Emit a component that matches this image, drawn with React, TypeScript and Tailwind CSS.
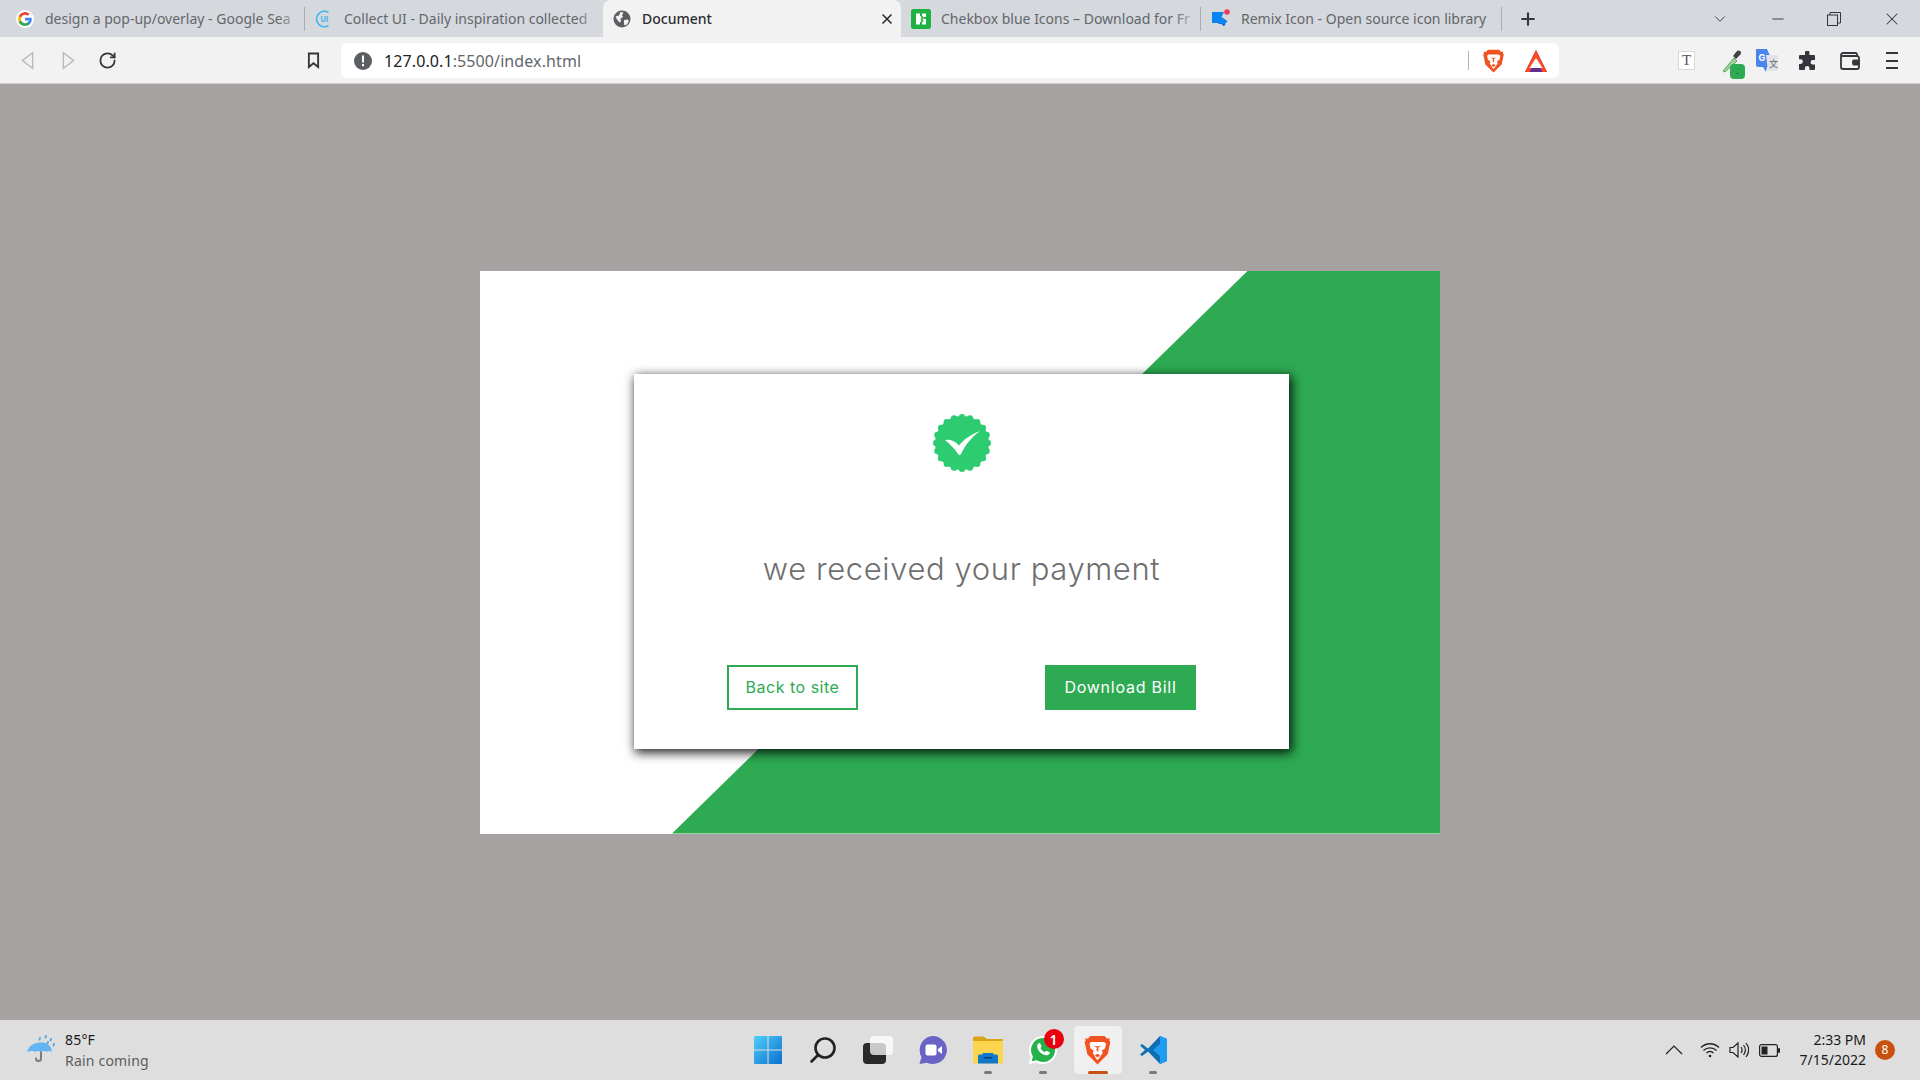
import type { ReactNode } from 'react';
import { ChevronDown, Minus, Plus, RotateCw, X } from 'lucide-react';

const uiFont = "font-['Noto_Sans',sans-serif]";
const cardFont = "font-['Inter',sans-serif]";

const tabs = [
  { title: 'design a pop-up/overlay - Google Sea', icon: <GoogleIcon />, width: 'w-[298px]' },
  { title: 'Collect UI - Daily inspiration collected', icon: <CollectIcon />, width: 'w-[298px]' },
  { title: 'Document', icon: <GlobeIcon />, width: 'w-[298px]', active: true },
  { title: 'Chekbox blue Icons – Download for Fr', icon: <ChekboxIcon />, width: 'w-[299px]' },
  { title: 'Remix Icon - Open source icon library', icon: <RemixIcon />, width: 'w-[300px]', last: true },
];

function GoogleIcon() {
  return (
    <svg viewBox="0 0 24 24" className="mr-px h-[18px] w-[18px] shrink-0 rounded-full bg-white">
      <path fill="#4285F4" d="M21 12.2c0-.7-.1-1.3-.2-1.9H12v3.6h5a4.4 4.4 0 0 1-1.9 2.8v2.4h3.1c1.8-1.7 2.8-4.1 2.8-6.9z" />
      <path fill="#34A853" d="M12 21.3c2.5 0 4.6-.8 6.2-2.2l-3.1-2.4c-.8.6-1.9.9-3.1.9-2.4 0-4.4-1.6-5.2-3.8H3.7v2.5a9.3 9.3 0 0 0 8.3 5z" />
      <path fill="#FBBC05" d="M6.8 13.8a5.6 5.6 0 0 1 0-3.6V7.7H3.7a9.3 9.3 0 0 0 0 8.6z" />
      <path fill="#EA4335" d="M12 6.4c1.4 0 2.6.5 3.5 1.4l2.7-2.7A9.3 9.3 0 0 0 3.7 7.7l3.1 2.5c.8-2.2 2.8-3.800 5.200-3.800z" />
    </svg>
  );
}

function CollectIcon() {
  return (
    <svg viewBox="0 0 18 18" className="mr-px h-[18px] w-[18px] shrink-0">
      <path d="M13.5 2.4A7.8 7.8 0 1 0 13.5 15.6" fill="none" stroke="#3db5ec" strokeWidth="1.5" />
      <text x="5.5" y="12" fontSize="7.5" fontWeight="700" fill="#3db5ec" fontFamily="Inter, sans-serif">UI</text>
    </svg>
  );
}

function GlobeIcon() {
  return (
    <svg viewBox="0 0 18 18" className="mr-px h-[18px] w-[18px] shrink-0">
      <circle cx="9" cy="9" r="8.5" fill="#5b5e62" />
      <path fill="#f2f2f2" d="M2.5 6.5 6 5.5l1.500-3.500 3 .5-1.500 2.500 1 2-2.500 1.500.5 3-1.500 1L4 9.500zM11 10l3.500-.5 1.500 1.500-2 3.500-2.500 1L11 13.500z" />
    </svg>
  );
}

function ChekboxIcon() {
  return (
    <svg viewBox="0 0 20 20" className="h-[20px] w-[20px] shrink-0">
      <rect width="20" height="20" rx="2.5" fill="#1fb141" />
      <path fill="#fff" d="M5 4.500h4v2.500a1.500 1.500 0 0 1 0 3 1.500 1.500 0 0 1 0 3v2.500H5zM11 4.500h4v3.500h-1.500a1 1 0 0 0 0 2H15v5.500h-4v-2.500a1.500 1.500 0 0 0 0-3 1.500 1.500 0 0 0 0-3z" />
    </svg>
  );
}

function RemixIcon() {
  return (
    <svg viewBox="0 0 20 20" className="h-[20px] w-[20px] shrink-0">
      <path fill="#0a84f0" d="M1 3h12l-2.500 5 6 4-4 5-3-3H1z" />
      <path fill="#0d5fd0" d="M6 14l4 0 3 3 1.500-2z" />
      <circle cx="16" cy="3" r="2.8" fill="#f0385a" />
    </svg>
  );
}

function BraveIcon({ size }: { size: string }) {
  return (
    <svg viewBox="0 0 24 28" className={size}>
      <path fill="#f1521f" d="M5.500 1h13l2.500 2.500 2.500-.5-.5 2 1 1.500-2.500 11.500-9.500 9.500L2.500 18 0 6.500 1 5 .5 3l2.500.5z" />
      <path fill="#fff" d="M6 6.500h12l2 1.500-1 4.500-3 2 1 2-4.500 6.500h-1L7.500 16.500l1-2-3-2-1-4.500zM8.500 10l3 2-.5 2 .8 1.500h.4L13 14l-.5-2 3-2-3 .5h-1z" />
      <path fill="#f1521f" d="M12 17.500l2.500 1.500-2.500 2-2.500-2z" />
    </svg>
  );
}

function TabItem({ title, icon, width, active, last }: { title: string; icon: ReactNode; width: string; active?: boolean; last?: boolean }) {
  return (
    <div className={`relative flex h-full shrink-0 items-center gap-[10px] pl-[10px] pr-[4px] ${width} ${active ? 'rounded-t-lg bg-[#f2f2f2]' : ''}`}>
      {icon}
      <span className={`min-w-0 flex-1 overflow-hidden whitespace-nowrap text-[14px] ${active ? 'font-medium text-[#2c2e31]' : 'text-[#63676c]'}`}>
        {title}
      </span>
      {active && <X size={16} strokeWidth={2.5} className="mr-[2px] shrink-0 text-[#2c2e31]" />}
      {!active && !last && <span className="absolute right-[2px] top-0 h-full w-[24px] bg-gradient-to-r from-transparent to-[#d5d8dc]" />}
    </div>
  );
}

function TabStrip() {
  return (
    <div className="flex h-[37px] items-center bg-[#d5d8dc] pl-[6px]">
      <TabItem {...tabs[0]} />
      <span className="h-[24px] w-px shrink-0 bg-[#a9adb1]" />
      <TabItem {...tabs[1]} />
      <TabItem {...tabs[2]} />
      <TabItem {...tabs[3]} />
      <span className="h-[24px] w-px shrink-0 bg-[#a9adb1]" />
      <TabItem {...tabs[4]} />
      <span className="h-[24px] w-px shrink-0 bg-[#a9adb1]" />
      <Plus size={20} strokeWidth={2.5} className="ml-[16px] text-[#33363a]" />
      <div className="ml-auto flex items-center text-[#33363a]">
        <ChevronDown size={18} strokeWidth={1.25} />
        <Minus size={18} strokeWidth={1.25} className="ml-[40px]" />
        <svg viewBox="0 0 14 14" className="ml-[40px] h-[14px] w-[14px]" fill="none" stroke="currentColor">
          <rect x="0.5" y="3" width="10" height="10.5" />
          <path d="M3 3V.5h10.500V11H10.500" />
        </svg>
        <X size={20} strokeWidth={1.25} className="ml-[41px] mr-[18px]" />
      </div>
    </div>
  );
}

function Toolbar() {
  return (
    <div className="flex h-[47px] items-start border-b border-[#cfcfcf] bg-[#f2f2f2] pt-[6px]">
      <div className="flex h-[35px] w-[341px] shrink-0 items-center">
        <svg viewBox="0 0 14 20" className="ml-[21px] h-[19px] w-[13px]" fill="none" stroke="#b9b9b9" strokeWidth="1.5">
          <path d="M12.500 1.500v17L1.500 10z" />
        </svg>
        <svg viewBox="0 0 14 20" className="ml-[28px] h-[19px] w-[13px]" fill="none" stroke="#b9b9b9" strokeWidth="1.5">
          <path d="M1.500 1.500v17L12.500 10z" />
        </svg>
        <RotateCw size={19} strokeWidth={2.25} className="ml-[23px] text-[#33363a]" />
        <svg viewBox="0 0 14 18" className="ml-[190px] h-[17px] w-[13px]" fill="none" stroke="#33363a" strokeWidth="2">
          <path d="M2 1.500h10v14.500l-5-4-5 4z" />
        </svg>
      </div>
      <div className="flex h-[35px] w-[1218px] shrink-0 items-center rounded-md bg-white">
        <svg viewBox="0 0 18 18" className="ml-[13px] h-[18px] w-[18px]">
          <circle cx="9" cy="9" r="9" fill="#5b5e62" />
          <rect x="8" y="3.5" width="2" height="7" fill="#fff" />
          <rect x="8" y="12" width="2" height="2.2" fill="#fff" />
        </svg>
        <span className="ml-[12px] text-[16px] tracking-[0.1px] text-[#202124]">
          127.0.0.1<span className="text-[#63676c]">:5500/index.html</span>
        </span>
        <span className="ml-auto h-[19px] w-px bg-[#b5b5b5]" />
        <span className="ml-[14px]">
          <BraveIcon size="block h-[24px] w-[21px]" />
        </span>
        <svg viewBox="0 0 24 24" className="ml-[20px] mr-[11px] h-[24px] w-[24px]">
          <path d="M12 1 23 23H1z" fill="#662d91" />
          <path d="M12 1 23 23h-4.500L12 9.500z" fill="#ff4724" />
          <path d="M12 1 1 23h4.500L12 9.500z" fill="#ff4724" />
          <path d="M12 9 5.500 19h13z" fill="#fff" />
        </svg>
      </div>
      <div className="flex h-[35px] flex-1 items-center text-[#33363a]">
        <div className="ml-[119px] flex h-[19px] w-[17px] items-center justify-center border border-[#d8d8d8] bg-white font-['Liberation_Serif',serif] text-[15px] leading-none text-[#555]">
          T
        </div>
        <div className="relative ml-[25px] h-[24px] w-[24px]">
          <svg viewBox="0 0 24 24" className="h-[24px] w-[24px]">
            <path d="M3 22 14 9l3 3L5 23z" fill="#9fd39c" stroke="#58a860" strokeWidth="1" />
            <path d="m13 7 4-5c1-1 4-1 4 2 0 1-1 2-1 2l-4 4z" fill="#3d4348" />
          </svg>
          <span className="absolute left-[10px] top-[15px] flex h-[15px] w-[15px] items-center justify-center rounded-sm bg-[#2eaa52] text-[8px] text-[#10361b]">
            .
          </span>
        </div>
        <svg viewBox="0 0 24 26" className="ml-[11px] h-[26px] w-[24px]">
          <path d="M1 1h11l8 18H12l-1 5-3-5H3a2 2 0 0 1-2-2z" fill="#4a85ec" />
          <path d="M11 7h11a1 1 0 0 1 1 1v14a1 1 0 0 1-1 1h-9z" fill="#dfe3e8" />
          <text x="3.5" y="13" fontSize="9" fontWeight="700" fill="#fff" fontFamily="Inter, sans-serif">G</text>
          <text x="14" y="19" fontSize="9" fill="#5c6670" fontFamily="'Noto Sans CJK SC', sans-serif">文</text>
        </svg>
        <svg viewBox="0 0 20 20" className="ml-[19px] h-[20px] w-[20px]" fill="#33363a">
          <path d="M7 1.500a2.200 2.200 0 0 1 4.400 0V4H16a1 1 0 0 1 1 1v4h-2.200a2.200 2.200 0 0 0 0 4.400H17V18a1 1 0 0 1-1 1h-4.500v-1.800a2.300 2.300 0 0 0-4.600 0V19H2a1 1 0 0 1-1-1v-5h1.500a2.400 2.400 0 0 0 0-4.800H1V5a1 1 0 0 1 1-1h5z" />
        </svg>
        <svg viewBox="0 0 20 18" className="ml-[22px] h-[18px] w-[20px]" fill="none" stroke="#33363a" strokeWidth="1.8">
          <path d="M17 4V2.500A1.500 1.500 0 0 0 15.500 1H3A2 2 0 0 0 1 3v12a2 2 0 0 0 2 2h14a2 2 0 0 0 2-2V6a2 2 0 0 0-2-2H2" />
          <rect x="13" y="8.5" width="6" height="4" rx="1" fill="#33363a" />
        </svg>
        <div className="ml-[26px] flex h-[17px] w-[12px] flex-col justify-between">
          <span className="h-[2px] bg-[#33363a]" />
          <span className="h-[2px] bg-[#33363a]" />
          <span className="h-[2px] bg-[#33363a]" />
        </div>
      </div>
    </div>
  );
}

function SuccessBadge() {
  // scalloped edge: ring of small circles round a filled disc
  const dots = Array.from({ length: 20 }, (_, i) => (i * Math.PI * 2) / 20);
  return (
    <svg viewBox="0 0 60 60" className="h-[60px] w-[60px]">
      <circle cx="30" cy="30" r="27" fill="#2ecc71" />
      {dots.map((a) => (
        <circle key={a} cx={30 + 25.8 * Math.cos(a)} cy={30 + 25.8 * Math.sin(a)} r="3.2" fill="#2ecc71" />
      ))}
      <path fill="#fff" d="M13 27c5-1 10 1 14 5.500 5-6.500 13-11.500 21-14.500-8 6-15 14-19 23-.5 1.500-2 1.500-3 0-3-5-8-10-13-14z" />
    </svg>
  );
}

function PaymentCard() {
  return (
    <div className="relative flex h-[375px] w-[655px] flex-col items-center bg-white pt-[39px] shadow-[2px_3px_10px_1px_rgba(0,0,0,0.85)]">
      <SuccessBadge />
      <h1 className={`mt-[78px] text-[31px] font-light leading-[36px] tracking-[0.6px] text-[#6f6f6f] ${cardFont}`}>
        we received your payment
      </h1>
      <div className="mt-[78px] flex w-full justify-between px-[93px]">
        <button className={`h-[45px] w-[131px] border-2 border-[#2eaa52] bg-white text-[16px] tracking-[0.5px] text-[#2eaa52] ${cardFont}`}>
          Back to site
        </button>
        <button className={`h-[45px] w-[151px] bg-[#2eaa52] text-[16px] tracking-[0.75px] text-white ${cardFont}`}>
          Download Bill
        </button>
      </div>
    </div>
  );
}

function Taskbar() {
  const apps = [
    {
      key: 'start',
      dot: false,
      node: (
        <svg viewBox="0 0 30 30" className="h-[30px] w-[30px]">
          <defs>
            <linearGradient id="winA" x1="0" y1="0" x2="1" y2="1">
              <stop offset="0" stopColor="#4fd0f8" />
              <stop offset="1" stopColor="#0a6fd0" />
            </linearGradient>
          </defs>
          <path fill="url(#winA)" d="M1 2a1 1 0 0 1 1-1h12.500v13.500H1zM15.500 1H28a1 1 0 0 1 1 1v12.500H15.500zM1 15.500h13.500V29H2a1 1 0 0 1-1-1zM15.500 15.500H29V28a1 1 0 0 1-1 1H15.500z" />
        </svg>
      ),
    },
    {
      key: 'search',
      dot: false,
      node: (
        <svg viewBox="0 0 28 28" className="h-[28px] w-[28px]" fill="none" stroke="#222" strokeLinecap="round" strokeWidth="2.6">
          <circle cx="16" cy="12" r="9.5" />
          <path d="m9 19-6.500 6.500" />
        </svg>
      ),
    },
    {
      key: 'tasks',
      dot: false,
      node: (
        <div className="relative h-[28px] w-[30px]">
          <div className="absolute bottom-0 left-0 h-[21px] w-[23px] rounded-sm bg-[#2a2a2a]" />
          <div className="absolute right-0 top-0 h-[19px] w-[23px] rounded-sm bg-white/75" />
        </div>
      ),
    },
    {
      key: 'chat',
      dot: false,
      node: (
        <svg viewBox="0 0 30 30" className="h-[30px] w-[30px]">
          <path fill="#6a62c4" d="M15 1a14 14 0 1 1-6 26.700L1.500 29 3.500 22A14 14 0 0 1 15 1z" />
          <rect x="7.5" y="9.5" width="11" height="11" rx="2" fill="#fff" />
          <path fill="#fff" d="m20 14 4-3v8l-4-3z" />
        </svg>
      ),
    },
    {
      key: 'files',
      dot: true,
      node: (
        <svg viewBox="0 0 30 28" className="h-[28px] w-[30px]">
          <path fill="#d9a514" d="M0 2a1.500 1.500 0 0 1 1.500-1.500h9L14 3h16v5H0z" />
          <path fill="#fbd54e" d="M0 5h30v21a1.500 1.500 0 0 1-1.500 1.500h-27A1.500 1.500 0 0 1 0 26z" />
          <path fill="#0f78c9" d="M5 20a1.500 1.500 0 0 1 1.500-1.500h3a1 1 0 0 1 1-1.500h9a1 1 0 0 1 1 1.500h3A1.500 1.500 0 0 1 25 20v7.500H5z" />
          <rect x="11" y="21" width="8" height="1.5" fill="#053e7a" />
        </svg>
      ),
    },
    {
      key: 'whatsapp',
      dot: true,
      node: (
        <div className="relative h-[28px] w-[28px]">
          <svg viewBox="0 0 28 28" className="h-[28px] w-[28px]">
            <path fill="#fff" d="M14 0a14 14 0 0 1 0 28c-2.500 0-4.500-.5-6.500-1.500L0 28l1.500-7.500A14 14 0 0 1 14 0z" />
            <path fill="#25b24a" d="M14 2a12 12 0 0 1 0 24c-2.400 0-4.400-.6-6.200-1.700L2.800 25.300l1.100-4.900A12 12 0 0 1 14 2z" />
            <path fill="#fff" d="M9.500 7.500c.6-.6 1.500-.6 1.900.2l1 2.200c.2.500 0 1-.3 1.400l-.7.800c.9 1.800 2.300 3.200 4.300 4.200l.9-1c.4-.4.900-.5 1.400-.3l2.200 1c.7.400.8 1.200.3 1.800-1 1.300-2.700 1.800-4.400 1.300-4.200-1.200-7-4.100-7.800-7.700-.3-1.400 0-2.900 1.200-3.900z" />
          </svg>
          <span className="absolute -right-[7px] -top-[7px] flex h-[20px] w-[20px] items-center justify-center rounded-full bg-[#e9000f] text-[14px] font-semibold text-white">
            1
          </span>
        </div>
      ),
    },
    { key: 'brave', dot: false, node: <BraveIcon size="relative h-[30px] w-[27px]" /> },
    {
      key: 'vscode',
      dot: true,
      node: (
        <svg viewBox="0 0 30 30" className="h-[30px] w-[30px]">
          <path fill="#0f6fb5" d="M2 10.500 4 9l6 4.500L22 1l7 3v22l-7 3-12-12.500L4 21l-2-1.500 5-4.500z" />
          <path fill="#1f9cf0" d="M22 1l7 3v22l-7 3V21l-7-6 7-6z" />
        </svg>
      ),
    },
  ];

  return (
    <div className={`flex h-[60px] items-center bg-[#dedede] ${uiFont}`}>
      <div className="flex w-[740px] items-center pl-[26px]">
        <svg viewBox="0 0 30 30" className="h-[30px] w-[30px]">
          <path d="M15 15v8.500a2.500 2.500 0 0 1-5 0" fill="none" stroke="#7b7b7b" strokeWidth="2" strokeLinecap="round" />
          <path fill="#62b4f3" d="M1 17C3 10 8.500 7.500 15 7.500S25 10 26 17c-2-1.500-4-1.500-5.500 0-1.500-1.500-3.500-1.500-5.500 0-2-1.500-4-1.500-5.500 0C8 15.500 4 15.500 1 17z" />
          <path stroke="#5aa9e6" strokeWidth="2" strokeLinecap="round" d="M14 3l-.5 1.500M20 1l-.5 1.500M25 4l-.5 1.500M28 9l-.5 1.500M22 7l-.5 1.500" />
        </svg>
        <div className="ml-[9px] flex flex-col text-[14px] leading-[21px] tracking-[0.2px]">
          <span className="text-[#1a1a1a]">85°F</span>
          <span className="text-[#5c5c5c]">Rain coming</span>
        </div>
      </div>
      <div className="flex items-center">
        {apps.map((app) => (
          <div key={app.key} className="relative flex h-[48px] w-[55px] items-center justify-center">
            {app.key === 'brave' && <span className="absolute inset-y-0 left-[4px] right-[3px] rounded bg-[#f0f0f0]" />}
            {app.node}
            {app.dot && <span className="absolute bottom-0 left-[24px] h-[3px] w-[8px] rounded-full bg-[#7a7a7a]" />}
            {app.key === 'brave' && <span className="absolute bottom-0 left-[18px] h-[3px] w-[20px] rounded-full bg-[#c9500f]" />}
          </div>
        ))}
      </div>
      <div className="ml-auto flex items-center pr-[25px]">
        <svg viewBox="0 0 18 10" className="h-[10px] w-[18px]" fill="none" stroke="#222" strokeWidth="1.2">
          <path d="m1 9 8-8 8 8" />
        </svg>
        <svg viewBox="0 0 20 16" className="ml-[17px] h-[16px] w-[20px]" fill="none" stroke="#222" strokeWidth="1.3">
          <path d="M1 5.500c5-5 13-5 18 0M3.500 8.500c3.500-3.500 9.500-3.500 13 0M6.500 11c2-2 5-2 7 0" />
          <circle cx="10" cy="14" r="1.3" fill="#222" stroke="none" />
        </svg>
        <svg viewBox="0 0 20 16" className="ml-[9px] h-[16px] w-[20px]" fill="none" stroke="#222" strokeWidth="1.2">
          <path d="M1 5.500h3L9 1v14l-5-4.500H1zM12 5c1.300 1.800 1.300 4.200 0 6M14.500 3c2.300 3 2.300 7 0 10M17 1c3.300 4.300 3.300 9.700 0 14" />
        </svg>
        <svg viewBox="0 0 21 13" className="ml-[10px] h-[13px] w-[21px]">
          <rect x="0.6" y="0.6" width="17.8" height="11.8" rx="2" fill="none" stroke="#222" strokeWidth="1.2" />
          <rect x="2.5" y="2.5" width="6" height="8" fill="#222" />
          <rect x="19" y="4" width="2" height="5" rx="1" fill="#222" />
        </svg>
        <div className="ml-[20px] flex flex-col items-end text-[14px] leading-[20px] text-[#1a1a1a]">
          <span>2:33 PM</span>
          <span>7/15/2022</span>
        </div>
        <span className="ml-[9px] flex h-[20px] w-[20px] items-center justify-center rounded-full bg-[#ca5010] text-[12px] text-white">
          8
        </span>
      </div>
    </div>
  );
}

export default function App() {
  return (
    <div className={`flex h-[1080px] w-[1920px] flex-col overflow-hidden ${uiFont}`}>
      <TabStrip />
      <Toolbar />
      <main className="flex flex-1 items-center justify-center bg-[#a6a2a1]">
        <section className="relative h-[563px] w-[960px] bg-white pl-[154px] pt-[103px]">
          <div className="absolute inset-0 bg-[#2eaa52] [clip-path:polygon(80%_0,100%_0,100%_100%,20%_100%)]" />
          <PaymentCard />
        </section>
      </main>
      <Taskbar />
    </div>
  );
}
